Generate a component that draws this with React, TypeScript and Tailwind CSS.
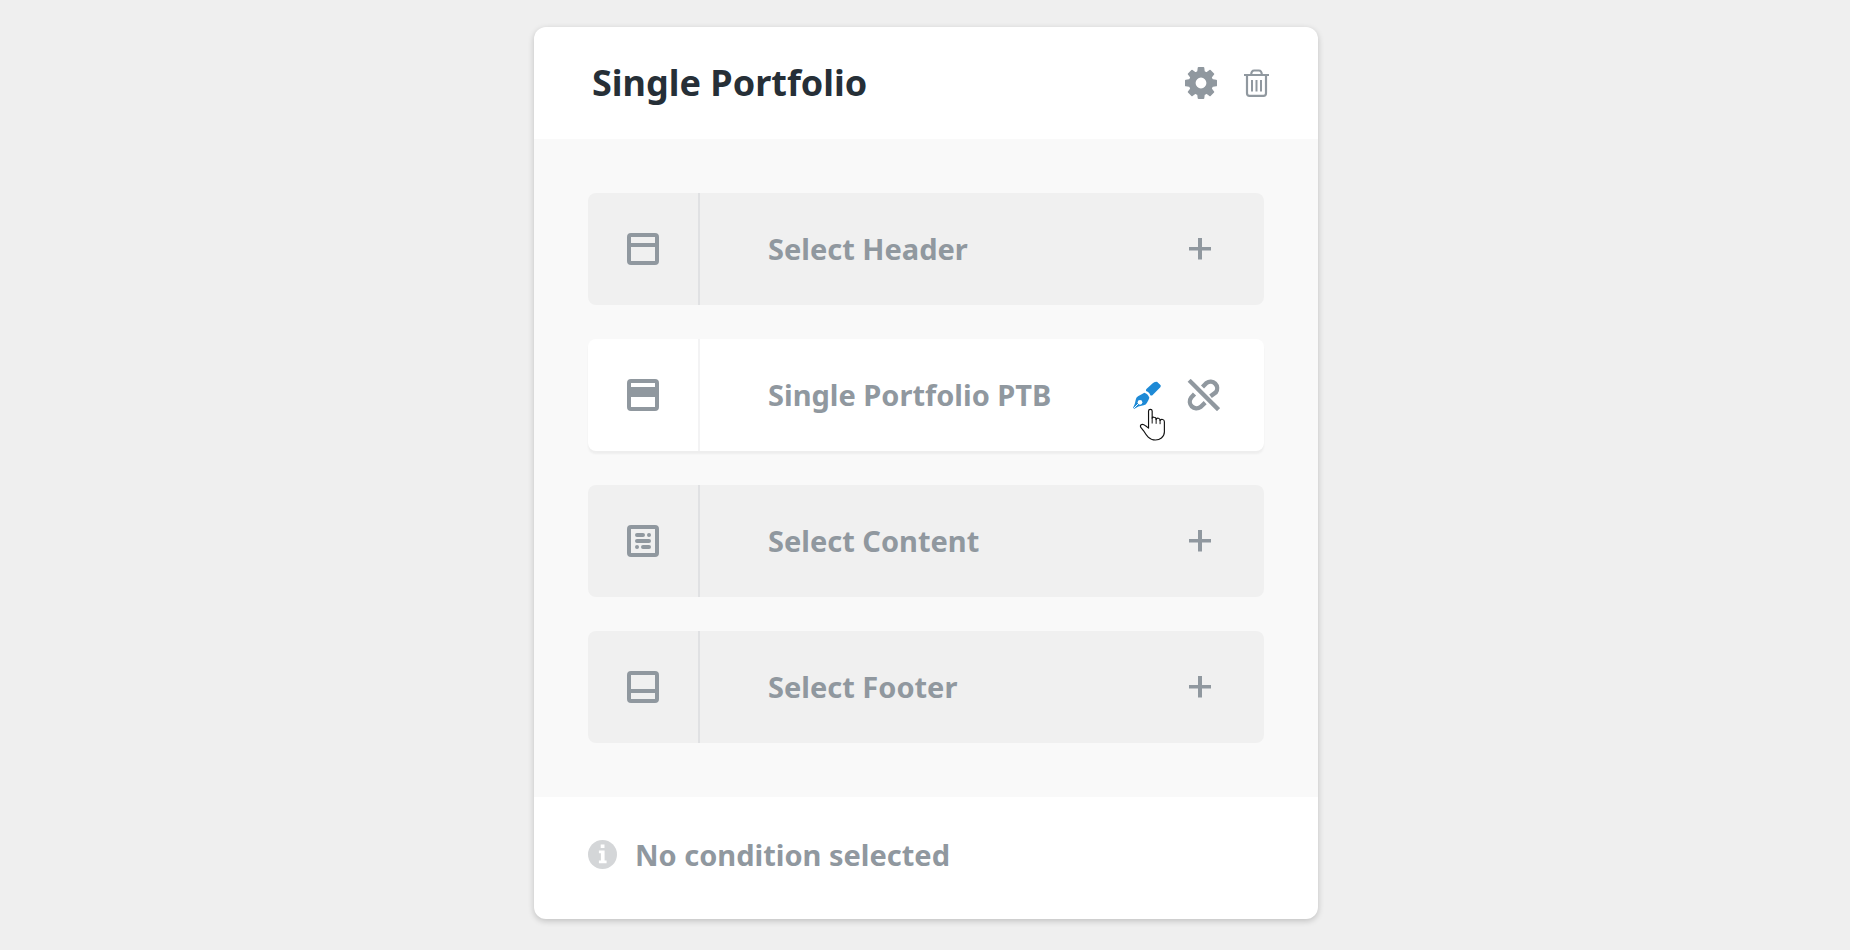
import { ReactNode } from "react";

interface IconProps {
  className?: string;
}

const GearIcon = ({ className }: IconProps) => (
  <svg viewBox="-16 -16 32 32" className={className} aria-hidden="true">
    <circle r="8.8" fill="none" stroke="currentColor" strokeWidth="6.8" />
    {[0, 45, 90, 135, 180, 225, 270, 315].map((angle) => (
      <path
        key={angle}
        d="M-2.4 -16h4.8q.8 0 .9.8l.6 4.6h-7.8l.6-4.6q.1-.8.9-.8z"
        fill="currentColor"
        transform={`rotate(${angle})`}
      />
    ))}
  </svg>
);

const TrashIcon = ({ className }: IconProps) => (
  <svg
    viewBox="0 0 25 28"
    fill="none"
    stroke="currentColor"
    strokeWidth="2.2"
    className={className}
    aria-hidden="true"
  >
    <path d="M0 6h25M3 6v18.2q0 2.6 2.6 2.6h13.800q2.6 0 2.6-2.6V6" />
    <path d="M7.200 6q0-4.500 3-4.500h4.600q3 0 3 4.500" />
    <path d="M8 11v11.500M12.500 11v11.500M17 11v11.500" strokeWidth="2" />
  </svg>
);

const FrameIcon = ({ children }: { children: ReactNode }) => (
  <svg viewBox="0 0 32 32" fill="currentColor" className="size-8" aria-hidden="true">
    <rect x="2" y="2" width="28" height="28" rx="2" fill="none" stroke="currentColor" strokeWidth="4" />
    {children}
  </svg>
);

const PlusIcon = ({ className }: IconProps) => (
  <svg viewBox="0 0 22 22" className={className} aria-hidden="true">
    <path d="M0 9h22v3.500H0zM9 0h4v21.500H9z" fill="currentColor" />
  </svg>
);

const PenIcon = ({ className }: IconProps) => (
  <svg viewBox="69 63 84 84" className={className} aria-hidden="true">
    <path
      fill="currentColor"
      d="M108 93Q107 89 110 86L129 69Q134 65 141 65L152 76Q153 79 151 82L128 105Q125 108 121 106Q119 97 108 93z"
    />
    <path
      fill="currentColor"
      d="M103 98Q114 101 118 113Q116 120 111 128Q108 134 101 136Q84 138 72 147L69 144Q76 130 77 120Q78 112 84 109Q94 103 103 98z"
    />
    <path d="M70 146L88 128" stroke="#fff" strokeWidth="3" />
    <circle cx="90" cy="127" r="7" fill="#fff" />
  </svg>
);

const UnlinkIcon = ({ className }: IconProps) => (
  <svg
    viewBox="231 57 98 96"
    fill="none"
    stroke="currentColor"
    strokeWidth="13"
    className={className}
    aria-hidden="true"
  >
    <path d="M277 81L289 69A20 20 0 0 1 317 97L301 109" />
    <path d="M253 102L243 113A20 20 0 0 0 271 141L285 128" />
    <path d="M237 61L325 149" />
  </svg>
);

const InfoIcon = ({ className }: IconProps) => (
  <svg viewBox="0 0 29 29" className={className} aria-hidden="true">
    <circle cx="14.5" cy="14.5" r="14.5" fill="currentColor" />
    <path
      fill="#fff"
      d="M12.7 4.6h3.8v3.5h-3.8zM10.9 10.5h5.7v10h2v2.8h-7.7v-2.8h2v-7.2h-2z"
    />
  </svg>
);

const HandCursor = ({ className }: IconProps) => (
  <svg viewBox="88 145 80 100" className={className} aria-hidden="true">
    <path
      fill="#fff"
      stroke="#111"
      strokeWidth="3.5"
      strokeLinejoin="round"
      d="M116 206V154Q116 149 121.500 149T127 154V176Q128 172 133 173Q139 173 139 180Q140 175 146 176Q151 177 151 183Q153 178 159 180Q164 181 164 187V218Q164 229 155 236Q148 242 137 242Q124 242 115 233Q108 226 101 214L92 203Q90 197 95 195Q101 194 107 199z"
    />
    <path fill="none" stroke="#111" strokeWidth="3" d="M127 174V192M139 178V193M151 181V194" />
  </svg>
);

interface LayoutRowProps {
  icon: ReactNode;
  label: string;
  selected?: boolean;
  children: ReactNode;
}

const LayoutRow = ({ icon, label, selected, children }: LayoutRowProps) => {
  return (
    <li
      className={`flex h-28 items-stretch rounded-lg ${
        selected ? "bg-white shadow-[0_3px_2px_#eeeeee]" : "bg-[#f0f0f0]"
      }`}
    >
      <div
        className={`flex w-28 shrink-0 items-center justify-center border-r-2 ${
          selected ? "border-[#f3f3f4]" : "border-[#e0e1e3]"
        }`}
      >
        {icon}
      </div>
      <div className="flex grow items-center pr-[42px] pl-17">
        <span className="grow text-[29px]">{label}</span>
        {children}
      </div>
    </li>
  );
};

const AddButton = ({ label }: { label: string }) => (
  <button type="button" aria-label={label} className="flex size-11 items-center justify-center">
    <PlusIcon className="size-[22px]" />
  </button>
);

const App = () => {
  return (
    <main className="min-h-screen bg-[#efefef] py-[27px] pr-4 pl-[18px] font-['Noto_Sans',sans-serif] font-bold text-[#90989f]">
      <section className="mx-auto max-w-[784px] overflow-hidden rounded-xl bg-white shadow-[0_2px_6px_rgba(0,0,0,0.2)]">
        <header className="flex h-28 items-center justify-between pr-[49px] pl-[58px]">
          <h1 className="text-4xl text-[#262f37]">Single Portfolio</h1>
          <div className="flex items-center gap-[27px]">
            <button type="button" aria-label="Settings">
              <GearIcon className="size-8" />
            </button>
            <button type="button" aria-label="Delete">
              <TrashIcon className="h-7 w-[25px]" />
            </button>
          </div>
        </header>

        <ul className="flex flex-col gap-[34px] bg-[#f9f9f9] p-[54px]">
          <LayoutRow
            label="Select Header"
            icon={
              <FrameIcon>
                <path d="M2 10h28v4H2z" />
              </FrameIcon>
            }
          >
            <AddButton label="Select header" />
          </LayoutRow>
          <LayoutRow
            selected
            label="Single Portfolio PTB"
            icon={
              <FrameIcon>
                <path d="M2 8h28v10H2z" />
              </FrameIcon>
            }
          >
            <div className="flex items-center gap-[26px]">
              <button type="button" aria-label="Edit" className="relative text-[#1e8ad6]">
                <PenIcon className="size-7" />
                <HandCursor className="pointer-events-none absolute top-[27px] left-[6px] h-[33px] w-[27px]" />
              </button>
              <button type="button" aria-label="Unlink" className="mr-0.5">
                <UnlinkIcon className="h-8 w-[33px]" />
              </button>
            </div>
          </LayoutRow>
          <LayoutRow
            label="Select Content"
            icon={
              <FrameIcon>
                <path
                  d="M10 10h6M22 10h.01M10 16h12M10 22h.01M16 22h6"
                  stroke="currentColor"
                  strokeWidth="4"
                  strokeLinecap="round"
                />
              </FrameIcon>
            }
          >
            <AddButton label="Select content" />
          </LayoutRow>
          <LayoutRow
            label="Select Footer"
            icon={
              <FrameIcon>
                <path d="M2 18h28v4H2z" />
              </FrameIcon>
            }
          >
            <AddButton label="Select footer" />
          </LayoutRow>
        </ul>

        <footer className="flex items-center gap-[18px] px-[54px] pt-9 pb-[42px]">
          <InfoIcon className="size-[29px] text-[#d4d6d8]" />
          <p className="text-[29px]">No condition selected</p>
        </footer>
      </section>
    </main>
  );
};

export default App;
